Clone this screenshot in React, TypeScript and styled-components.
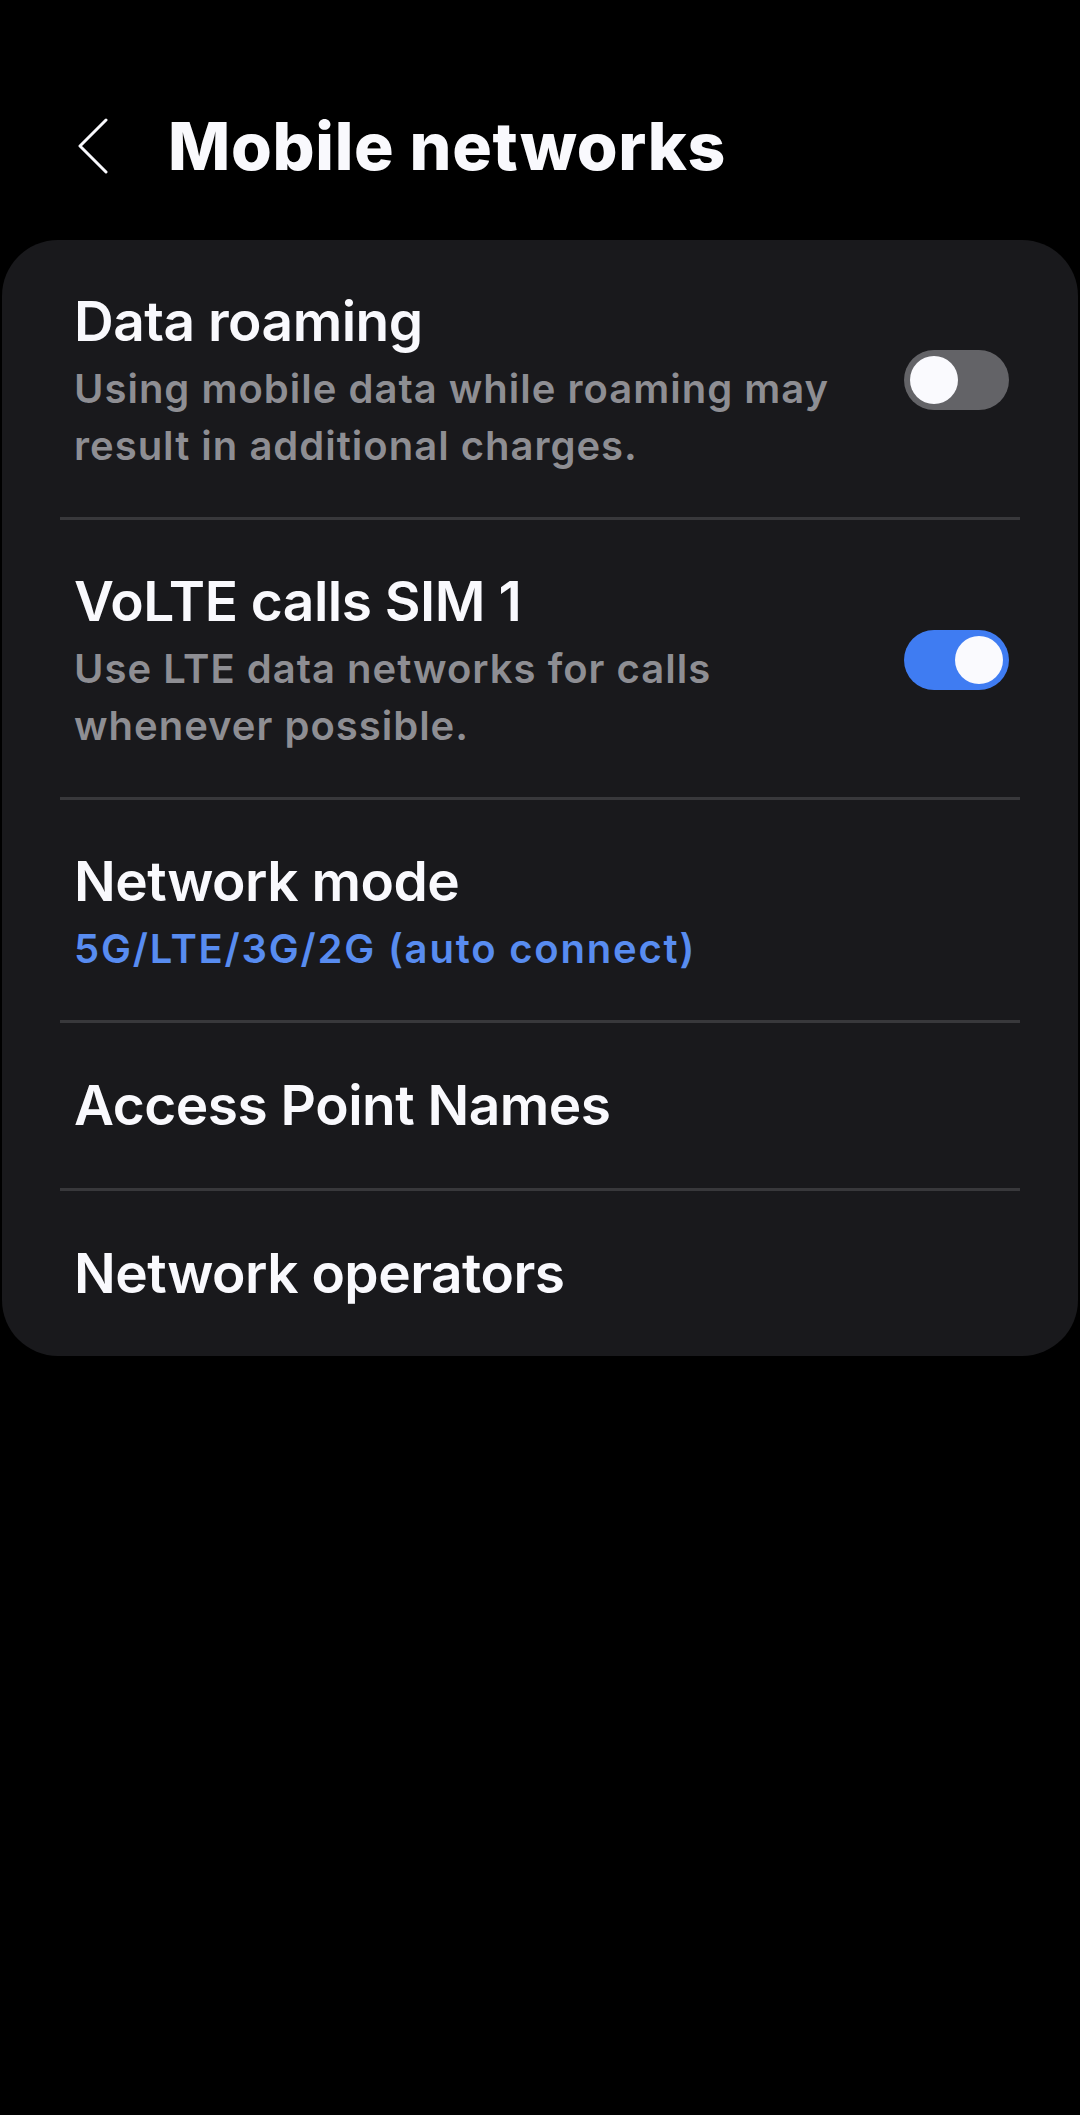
import styled, { createGlobalStyle } from "styled-components";

const GlobalStyle = createGlobalStyle`
    html, body {
        margin: 0;
        padding: 0;
        background: #000;
    }
    body {
        font-family: Inter, Roboto, "Liberation Sans", sans-serif;
        -webkit-font-smoothing: antialiased;
    }
`

const Screen = styled.div`
    width: 1080px;
    min-height: 2115px;
    background: #000;
`

const Header = styled.div`
    display: flex;
    flex-direction: row;
    align-items: center;
    gap: 60px;
    height: 90px;
    padding: 101px 0 49px 78px;
`

const BackButton = styled.svg`
    width: 30px;
    height: 56px;
    flex-shrink: 0;
`

const PageTitle = styled.h1`
    margin: 0;
    font-size: 66px;
    line-height: 90px;
    font-weight: 800;
    color: #f9f9fd;
    letter-spacing: 0.7px;
`

const Card = styled.div`
    margin: 0 2px;
    background: #19191c;
    border-radius: 56px;
    overflow: hidden;
`

const Row = styled.div<{ $hasSub: boolean }>`
    display: flex;
    flex-direction: row;
    align-items: center;
    padding: ${p => (p.$hasSub ? "48px 69px 43px 72px" : "49px 69px 50px 72px")};
`

const RowText = styled.div`
    flex: 1;
    display: flex;
    flex-direction: column;
`

const RowTitle = styled.div`
    font-size: 55px;
    line-height: 66px;
    font-weight: 600;
    color: #f9f9fd;
    letter-spacing: -0.5px;
`

const RowSub = styled.div<{ $accent?: boolean }>`
    margin-top: 6px;
    font-size: 40px;
    line-height: 57px;
    font-weight: 600;
    white-space: pre-line;
    letter-spacing: ${p => (p.$accent ? "1.8px" : "1px")};
    color: ${p => (p.$accent ? "#588cf0" : "#8e8e93")};
`

const Divider = styled.div`
    height: 3px;
    margin: 0 58px;
    background: #38383b;
`

const Track = styled.div<{ $on: boolean }>`
    position: relative;
    width: 105px;
    height: 60px;
    flex-shrink: 0;
    margin-top: -3px;
    border-radius: 30px;
    background: ${p => (p.$on ? "#3f7cf2" : "#636367")};
`

const Thumb = styled.div<{ $on: boolean }>`
    position: absolute;
    top: 6px;
    left: ${p => (p.$on ? "51px" : "6px")};
    width: 48px;
    height: 48px;
    border-radius: 50%;
    background: #fafafe;
`

type Item = {
    title: string
    sub?: string
    accent?: boolean
    toggle?: boolean
}

const items: Item[] = [
    { title: "Data roaming", sub: "Using mobile data while roaming may\nresult in additional charges.", toggle: false },
    { title: "VoLTE calls SIM 1", sub: "Use LTE data networks for calls\nwhenever possible.", toggle: true },
    { title: "Network mode", sub: "5G/LTE/3G/2G (auto connect)", accent: true },
    { title: "Access Point Names" },
    { title: "Network operators" },
]

function Switch({ on }: { on: boolean }) {
    return (
        <Track $on={on}>
            <Thumb $on={on} />
        </Track>
    )
}

export default function App() {
    return (
        <Screen>
            <GlobalStyle />
            <Header>
                <BackButton viewBox="0 0 30 56" fill="none">
                    <path d="M28 2 L2 28 L28 54" stroke="#f9f9fd" strokeWidth="3" strokeLinecap="round" strokeLinejoin="round" />
                </BackButton>
                <PageTitle>Mobile networks</PageTitle>
            </Header>
            <Card>
                {items.map((item, i) => (
                    <div key={item.title}>
                        {i > 0 && <Divider />}
                        <Row $hasSub={!!item.sub}>
                            <RowText>
                                <RowTitle>{item.title}</RowTitle>
                                {item.sub && <RowSub $accent={item.accent}>{item.sub}</RowSub>}
                            </RowText>
                            {item.toggle !== undefined && <Switch on={item.toggle} />}
                        </Row>
                    </div>
                ))}
            </Card>
        </Screen>
    )
}
